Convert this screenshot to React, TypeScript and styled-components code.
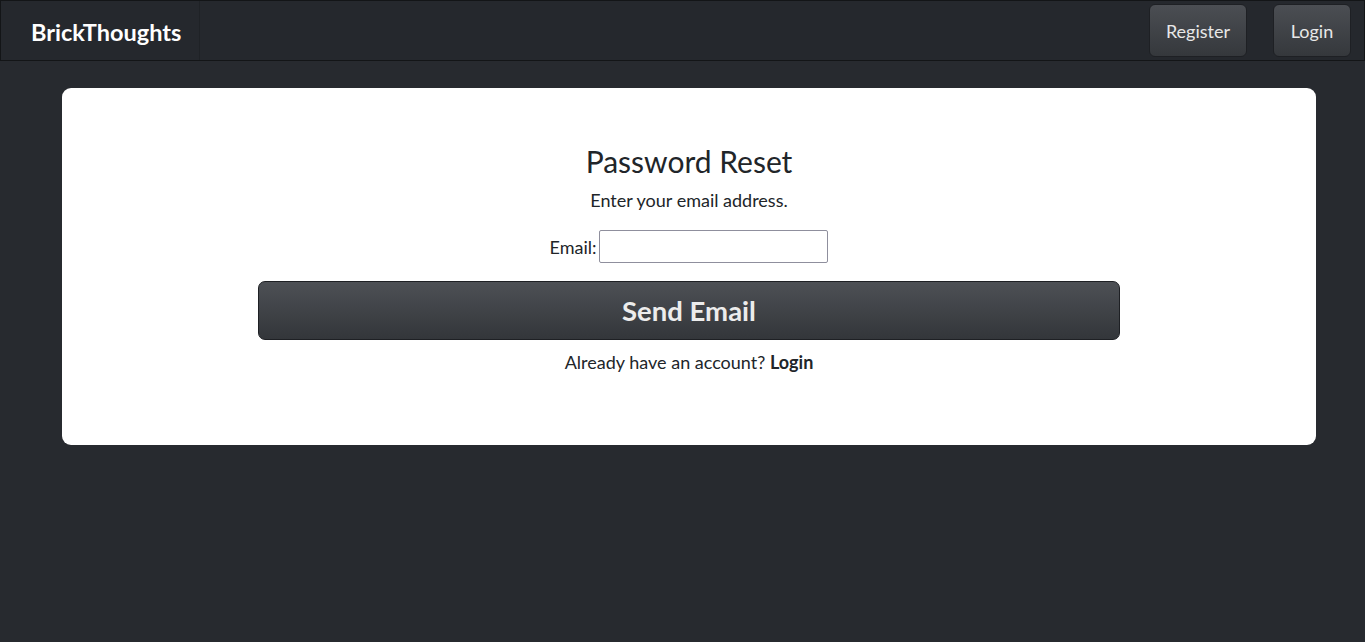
import React from "react";
import styled, { createGlobalStyle } from "styled-components";

const Global = createGlobalStyle`
  html, body { margin: 0; padding: 0; background: #272a2f; }
  body { font-family: Lato, "Open Sans", "Liberation Sans", sans-serif; }
  * { box-sizing: border-box; }
`;

const Page = styled.div`
  min-height: 642px;
  background: #272a2f;
`;

const Nav = styled.nav`
  height: 61px;
  display: flex;
  align-items: stretch;
  justify-content: space-between;
  background: #25282d;
  border: 1px solid #131517;
`;

const Brand = styled.a`
  display: flex;
  align-items: center;
  width: 199px;
  padding-left: 30px;
  padding-top: 2px;
  border-right: 1px solid #1f2226;
  color: #ffffff;
  font-weight: 700;
  font-size: 23.5px;
  text-decoration: none;
`;

const NavRight = styled.div`
  display: flex;
  align-items: center;
  gap: 26px;
  padding-right: 13px;
`;

const NavButton = styled.button<{ $w: number }>`
  width: ${(p) => p.$w}px;
  height: 53px;
  border-radius: 6px;
  border: 1px solid #1e2024;
  background: linear-gradient(#4b4e53, #35383c);
  color: #e8e8e8;
  font-family: inherit;
  font-size: 18px;
  cursor: pointer;
`;

const Card = styled.main`
  margin: 27px 49px 0 62px;
  height: 357px;
  background: #fff;
  border-radius: 9px;
  display: flex;
  flex-direction: column;
  align-items: center;
  padding-top: 54px;
  color: #212529;
`;

const Title = styled.h1`
  margin: 0;
  font-size: 30px;
  font-weight: 400;
  line-height: 38px;
`;

const Sub = styled.p`
  margin: 8px 0 0;
  font-size: 18px;
  line-height: 24px;
`;

const Row = styled.label`
  margin-top: 18px;
  display: flex;
  align-items: center;
  gap: 3px;
  font-size: 18px;
`;

const Input = styled.input`
  width: 229px;
  height: 33px;
  border: 1px solid #8f8f9d;
  border-radius: 2px;
  font-size: 16px;
  padding: 0 4px;
`;

const Submit = styled.button`
  margin-top: 18px;
  width: 862px;
  height: 59px;
  border-radius: 7px;
  border: 1px solid #1e2024;
  background: linear-gradient(#4d5055, #33363a);
  color: #ececec;
  font-family: inherit;
  font-size: 27.5px;
  font-weight: 700;
  cursor: pointer;
`;

const Footer = styled.p`
  margin: 10px 0 0;
  font-size: 18px;
  line-height: 24px;
  b { font-weight: 700; }
`;

export default function App() {
  return (
    <Page>
      <Global />
      <Nav>
        <Brand href="#">BrickThoughts</Brand>
        <NavRight>
          <NavButton $w={98}>Register</NavButton>
          <NavButton $w={78}>Login</NavButton>
        </NavRight>
      </Nav>
      <Card>
        <Title>Password Reset</Title>
        <Sub>Enter your email address.</Sub>
        <Row>
          Email: <Input type="email" />
        </Row>
        <Submit>Send Email</Submit>
        <Footer>
          Already have an account? <b>Login</b>
        </Footer>
      </Card>
    </Page>
  );
}
